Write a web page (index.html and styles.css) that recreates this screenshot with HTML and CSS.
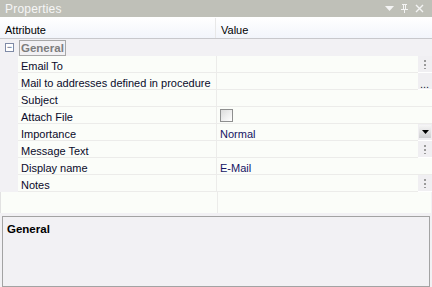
FILE: index.html
```html
<!DOCTYPE html>
<html lang="en">

<head>
    <meta charset="UTF-8">
    <title>Properties</title>
    <link rel="stylesheet" href="styles.css">
</head>

<body>
    <div class="panel">
        <div class="titlebar">
            <span class="title">Properties</span>
            <div class="title-buttons">
                <svg width="9" height="9" viewBox="0 0 9 9"><path d="M0 2h9L4.5 7z" fill="#f4f4f4"/></svg>
                <svg width="9" height="9" viewBox="0 0 9 9"><path d="M2 0h5v1H6v4h2v1H5v3H4V6H1V5h2V1H2z M4 1v4h1V1z" fill="#f4f4f4"/></svg>
                <svg width="9" height="9" viewBox="0 0 9 9"><path d="M1 1l7 7M8 1L1 8" stroke="#f4f4f4" stroke-width="1.4"/></svg>
            </div>
        </div>

        <div class="grid">
            <div class="header">
                <div class="col-attr">Attribute</div>
                <div class="col-value">Value</div>
            </div>

            <div class="category">
                <span class="toggle">&minus;</span>
                <span class="category-name">General</span>
            </div>

            <div class="row">
                <div class="gutter"></div>
                <div class="attr">Email To</div>
                <div class="value"></div>
                <div class="btn"><span class="dots"></span></div>
            </div>
            <div class="row">
                <div class="gutter"></div>
                <div class="attr">Mail to addresses defined in procedure</div>
                <div class="value"></div>
                <div class="btn ellipsis">...</div>
            </div>
            <div class="row">
                <div class="gutter"></div>
                <div class="attr">Subject</div>
                <div class="value wide"></div>
            </div>
            <div class="row">
                <div class="gutter"></div>
                <div class="attr">Attach File</div>
                <div class="value wide"><span class="checkbox"></span></div>
            </div>
            <div class="row">
                <div class="gutter"></div>
                <div class="attr">Importance</div>
                <div class="value">Normal</div>
                <div class="btn"><span class="dropdown"><svg width="7" height="4" viewBox="0 0 7 4"><path d="M0 0h7L3.5 4z" fill="#000"/></svg></span></div>
            </div>
            <div class="row">
                <div class="gutter"></div>
                <div class="attr">Message Text</div>
                <div class="value"></div>
                <div class="btn"><span class="dots"></span></div>
            </div>
            <div class="row">
                <div class="gutter"></div>
                <div class="attr">Display name</div>
                <div class="value wide">E-Mail</div>
            </div>
            <div class="row">
                <div class="gutter"></div>
                <div class="attr">Notes</div>
                <div class="value"></div>
                <div class="btn"><span class="dots"></span></div>
            </div>

            <div class="filler">
                <div class="filler-attr"></div>
                <div class="filler-value"></div>
            </div>
        </div>

        <div class="description">
            <div class="desc-title">General</div>
        </div>
    </div>
</body>

</html>
```

FILE: styles.css
```css
body {
    margin: 0;
    font-family: "Liberation Sans", Arial, sans-serif;
    font-size: 11px;
    background: #f2f1f4;
}

.panel {
    width: 432px;
    height: 287px;
    display: flex;
    flex-direction: column;
    background: #f2f1f4;
}

.titlebar {
    height: 19px;
    box-sizing: border-box;
    background: #bfc0b8;
    border-bottom: 1px solid #ffffff;
    display: flex;
    align-items: center;
    justify-content: space-between;
    padding: 2px 8px 0 5px;
}

.title {
    color: #f6f6f6;
    font-size: 12px;
    letter-spacing: 0.2px;
}

.title-buttons {
    display: flex;
    gap: 6px;
    align-items: center;
    margin-top: -2px;
}

.grid {
    display: flex;
    flex-direction: column;
}

.header {
    height: 21px;
    box-sizing: border-box;
    display: flex;
    background: linear-gradient(to bottom, #ffffff, #f2f5fb);
    border-bottom: 1px solid #c8c8cc;
    color: #000000;
}

.col-attr {
    width: 210px;
    padding: 6px 0 0 5px;
    border-right: 1px solid #e8e8e8;
}

.col-value {
    flex: 1;
    padding: 6px 0 0 5px;
}

.category {
    height: 17px;
    display: flex;
    align-items: center;
    padding-top: 1px;
    box-sizing: border-box;
    background: #f2f1f4;
}

.toggle {
    width: 7px;
    height: 7px;
    margin-left: 5px;
    border: 1px solid #7f8aa6;
    background: #ffffff;
    color: #3b4a78;
    font-size: 9px;
    line-height: 7px;
    text-align: center;
}

.category-name {
    margin-left: 5px;
    padding: 1px 1px 0 1px;
    border: 1px solid #a8a8a8;
    color: #7d7d7d;
    font-weight: bold;
    font-size: 11.5px;
    line-height: 13px;
}

.row {
    height: 17px;
    display: flex;
}

.gutter {
    width: 18px;
    background: #f2f1f4;
}

.attr {
    width: 195px;
    padding: 4px 0 0 3px;
    background: #fbfdf9;
    border-bottom: 1px solid #ececea;
    border-right: 1px solid #ececea;
    color: #0a0a2a;
    line-height: 12px;
    white-space: nowrap;
}

.value {
    width: 198px;
    padding: 4px 0 0 3px;
    background: #fbfdf9;
    border-bottom: 1px solid #ececea;
    color: #141464;
    line-height: 12px;
    display: flex;
    align-items: center;
}

.value.wide {
    flex: 1;
}

.btn {
    flex: 1;
    background: #f0eff2;
    border-bottom: 1px solid #ffffff;
    display: flex;
    align-items: center;
    justify-content: center;
}

.dots {
    width: 2px;
    height: 10px;
    background: radial-gradient(circle, #9a9a9a 1px, transparent 1px) 0 0 / 2px 4px repeat-y;
}

.ellipsis {
    align-items: flex-end;
    justify-content: flex-start;
    padding-left: 2px;
    color: #1a1a3a;
    line-height: 10px;
}

.dropdown {
    width: 12px;
    height: 13px;
    background: linear-gradient(to bottom, #f6f6f6, #cfcfd2);
    display: flex;
    align-items: center;
    justify-content: center;
}

.checkbox {
    width: 11px;
    height: 11px;
    margin-top: -3px;
    border: 1px solid #8e8f8f;
    background: linear-gradient(135deg, #dcdcdc, #ffffff);
}

.filler {
    height: 21px;
    display: flex;
}

.filler-attr {
    width: 216px;
    background: #fbfdf9;
    border-left: 1px solid #e2e2e2;
    border-right: 1px solid #ececea;
}

.filler-value {
    width: 213px;
    background: #fbfdf9;
}

.description {
    margin: 3px 2px 0 2px;
    height: 68px;
    border: 1px solid #a3a3a3;
    background: #f2f1f4;
    padding: 6px 4px 0 4px;
}

.desc-title {
    font-weight: bold;
    color: #000000;
    font-size: 11.5px;
}
```
